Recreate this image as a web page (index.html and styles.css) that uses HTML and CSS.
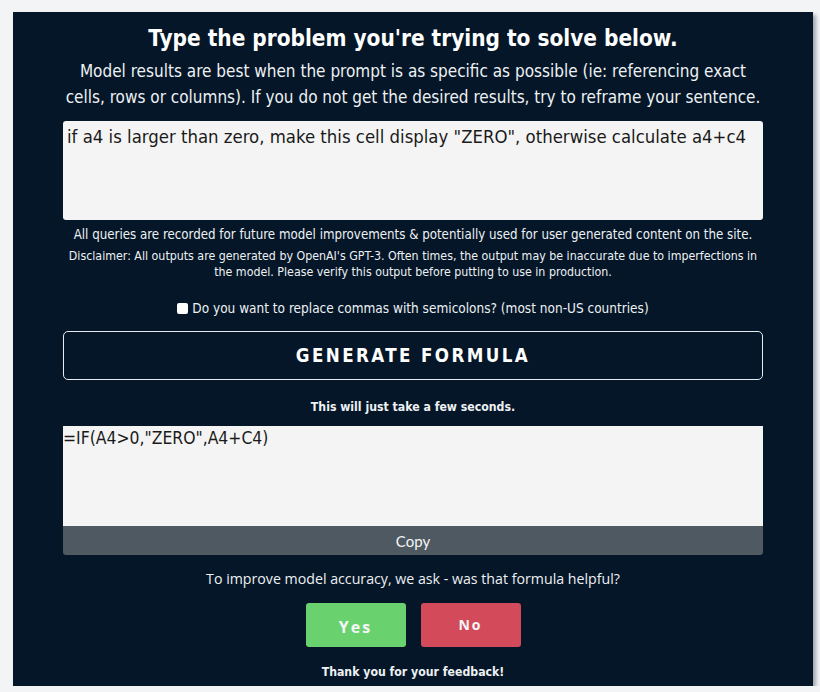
FILE: index.html
```html
<!DOCTYPE html>
<html>
<head>
<meta charset="utf-8">
<link rel="stylesheet" href="styles.css">
</head>
<body>
<div class="panel">
  <h1 class="title">Type the problem you're trying to solve below.</h1>
  <p class="lead">Model results are best when the prompt is as specific as possible (ie: referencing exact<br>cells, rows or columns). If you do not get the desired results, try to reframe your sentence.</p>
  <div class="input">if a4 is larger than zero, make this cell display "ZERO", otherwise calculate a4+c4</div>
  <p class="note">All queries are recorded for future model improvements &amp; potentially used for user generated content on the site.</p>
  <p class="disclaimer">Disclaimer: All outputs are generated by OpenAI's GPT-3. Often times, the output may be inaccurate due to imperfections in the model. Please verify this output before putting to use in production.</p>
  <label class="check"><span class="box"></span>Do you want to replace commas with semicolons? (most non-US countries)</label>
  <div class="generate">GENERATE FORMULA</div>
  <p class="wait">This will just take a few seconds.</p>
  <div class="output">=IF(A4&gt;0,"ZERO",A4+C4)</div>
  <div class="copy">Copy</div>
  <p class="ask">To improve model accuracy, we ask - was that formula helpful?</p>
  <div class="votes">
    <div class="vote yes">Yes</div>
    <div class="vote no">No</div>
  </div>
  <p class="thanks">Thank you for your feedback!</p>
</div>
</body>
</html>
```
FILE: styles.css
```css
html, body {
  margin: 0;
  padding: 0;
  background: #f3f4f6;
}
body {
  padding: 12px 0 0 13px;
  font-family: "DejaVu Sans Condensed", "Liberation Sans Narrow", "Liberation Sans", sans-serif;
  font-stretch: condensed;
}
.panel {
  width: 700px;
  height: 674px;
  padding: 0 50px;
  background: #041627;
  color: #eef1f4;
  box-shadow: 3px 3px 4px rgba(60, 70, 80, 0.45);
  display: flex;
  flex-direction: column;
  align-items: stretch;
  text-align: center;
}
.title {
  margin: 12px 0 0;
  font-size: 22.4px;
  line-height: 28px;
  font-weight: bold;
  color: #ffffff;
}
.lead {
  margin: 6px -10px 0;
  font-size: 17px;
  line-height: 26px;
}
.input {
  margin-top: 11px;
  height: 99px;
  box-sizing: border-box;
  background: #f4f4f4;
  border-radius: 3px;
  color: #1a1a1a;
  text-align: left;
  font-size: 18.4px;
  line-height: 22px;
  padding: 5px 4px;
}
.note {
  margin: 7px 0 0;
  font-size: 13.2px;
  line-height: 16px;
}
.disclaimer {
  margin: 5px 0 0;
  font-size: 12.3px;
  line-height: 16px;
}
.check {
  margin-top: 20px;
  font-size: 13.5px;
  line-height: 17px;
  display: flex;
  justify-content: center;
  align-items: center;
  gap: 4px;
}
.box {
  width: 11px;
  height: 11px;
  background: #fff;
  border-radius: 2px;
}
.generate {
  margin-top: 14px;
  height: 49px;
  box-sizing: border-box;
  border: 1px solid #e8edf2;
  border-radius: 5px;
  display: flex;
  align-items: center;
  justify-content: center;
  font-size: 18.6px;
  font-weight: bold;
  letter-spacing: 2.4px;
  color: #ffffff;
}
.wait {
  margin: 19px 0 0;
  font-size: 12.2px;
  line-height: 16px;
  font-weight: bold;
}
.output {
  margin-top: 11px;
  height: 100px;
  background: #f4f4f4;
  color: #1a1a1a;
  text-align: left;
  font-size: 17.4px;
  line-height: 22px;
  padding-top: 1px;
  box-sizing: border-box;
}
.copy {
  height: 29px;
  background: #4f5961;
  border-radius: 0 0 3px 3px;
  color: #f3f5f7;
  font-family: Lato, "Liberation Sans", sans-serif;
  font-stretch: normal;
  font-size: 15px;
  line-height: 30px;
}
.ask {
  margin: 15px 0 0;
  font-family: "Open Sans", "Liberation Sans", sans-serif;
  font-stretch: normal;
  font-size: 14.2px;
  line-height: 18px;
}
.votes {
  margin-top: 15px;
  display: flex;
  justify-content: center;
  gap: 15px;
}
.vote {
  width: 100px;
  height: 44px;
  border-radius: 3px;
  display: flex;
  justify-content: center;
  align-items: center;
  font-family: "Open Sans", "Liberation Sans", sans-serif;
  font-stretch: normal;
  font-weight: bold;
  letter-spacing: 2px;
  color: #f4f6f8;
}
.vote.yes {
  background: #69d26f;
  font-size: 16px;
  padding-top: 4px;
  box-sizing: border-box;
}
.vote.no {
  background: #d34b5b;
  font-size: 14px;
  padding-bottom: 2px;
  box-sizing: border-box;
}
.thanks {
  margin: 17px 0 0;
  font-size: 12.2px;
  line-height: 16px;
  font-weight: bold;
}
```
